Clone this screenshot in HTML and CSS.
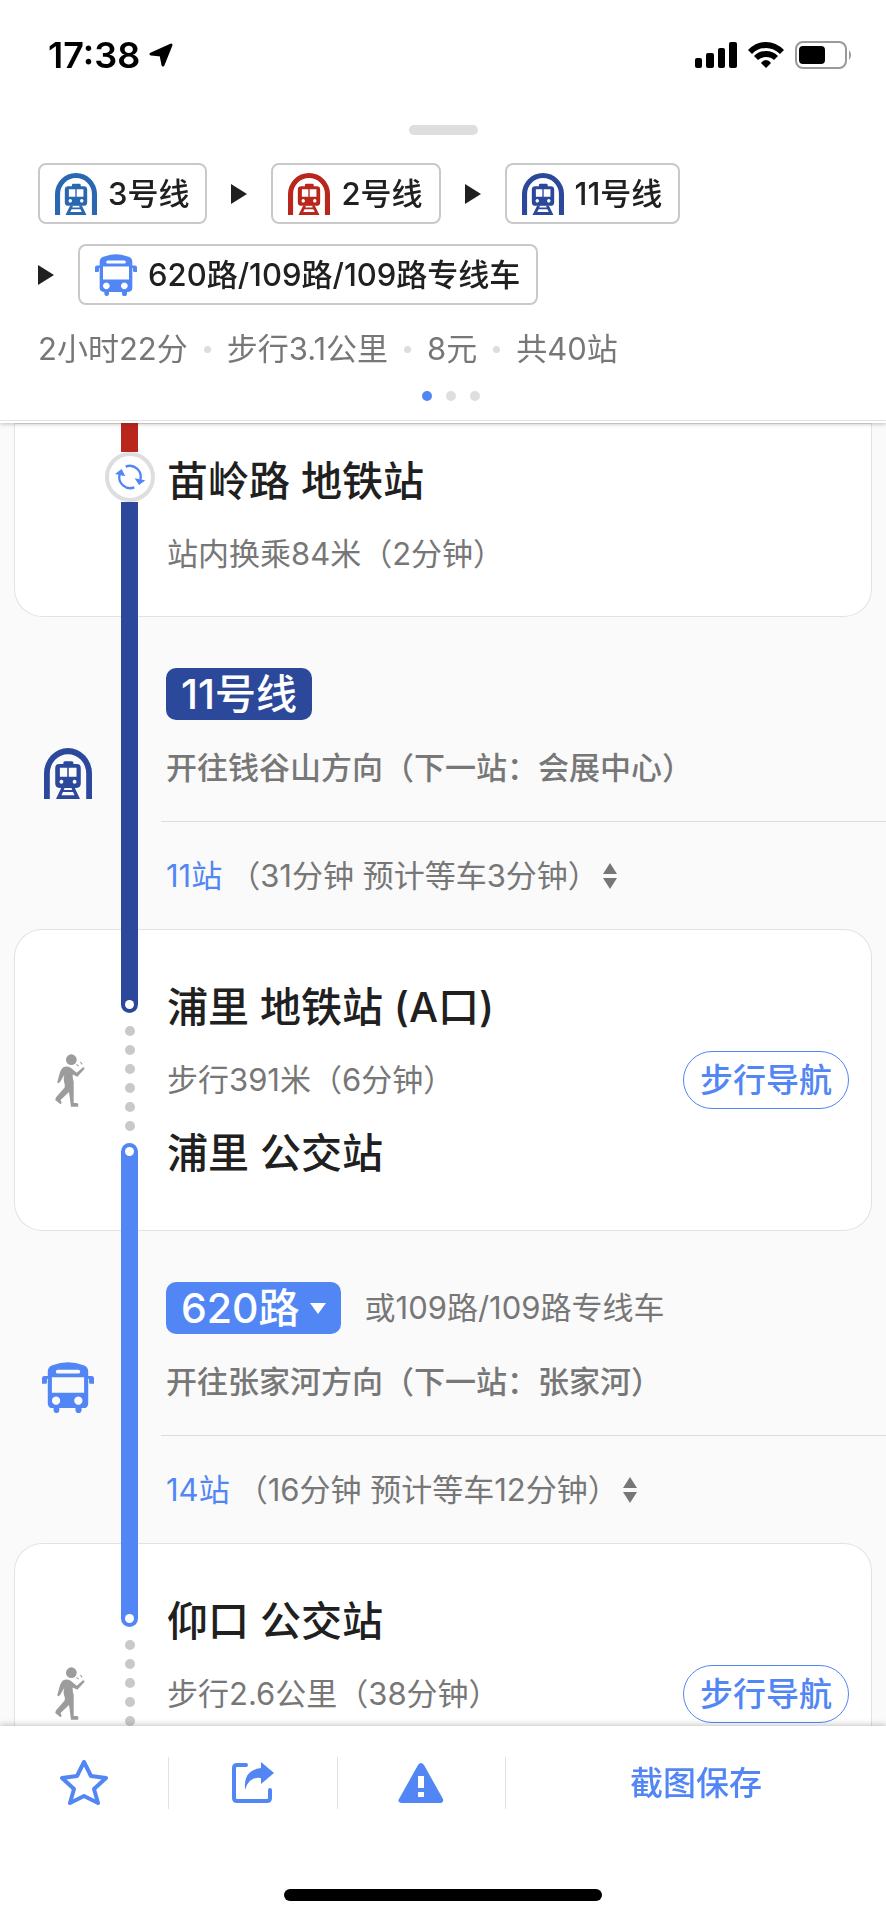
FILE: index.html
```html
<!DOCTYPE html>
<html lang="zh-CN">
<head>
  <meta charset="UTF-8" />
  <meta name="viewport" content="width=device-width, initial-scale=1" />
  <title>公交路线详情</title>
  <link rel="stylesheet" href="styles.css">
</head>
<body>

  <!-- Icons -->
  <svg class="sprite" aria-hidden="true">
    <symbol id="icon-train" viewBox="0 0 124 124" preserveAspectRatio="none">
      <path d="M0 124V62a62 62 0 0 1 124 0v62h-15V62a47 47 0 0 0-94 0v62z"/>
      <path fill-rule="evenodd" d="M50 39v-3q0-4 4-4h18q4 0 4 4v3h9q10 0 10 10v37q0 11-11 11H40q-11 0-11-11V49q0-10 10-10zM41 48v22h19V48zM64 48v22h20V48zM45 77a5 5 0 1 0 .1 0zM79 77a5 5 0 1 0 .1 0z"/>
      <path fill-rule="evenodd" d="M45 96h34l14 28H31zM53 97l-2 5h22l-2-5zM49 107l-4 8h34l-4-8z"/>
    </symbol>
    <symbol id="icon-bus" viewBox="0 0 126 124" preserveAspectRatio="none">
      <path fill-rule="evenodd" d="M14 24q0-12 11-16 38-15 76 0 11 4 11 16v76q0 12-12 12H26q-12 0-12-12zM38 19a4 4 0 0 0 0 9h50a4 4 0 0 0 0-9zM24 37v38h78V37zM34 84a10 10 0 1 0 .1 0zM88 84a10 10 0 1 0 .1 0z"/>
      <path d="M28 110h14v7a7 7 0 0 1-14 0zM81 110h15v7a7 7 0 0 1-15 0zM0 53V40q0-6 6-6h10v7h-4v8q0 4-3 4zM126 53V40q0-6-6-6h-10v7h4v8q0 4 3 4z"/>
    </symbol>
    <symbol id="icon-walk" viewBox="0 0 88 158">
      <circle cx="48" cy="17" r="16"/>
      <path d="M22 41q12-7 24 0l18 15 17-15q7-4 6 4L66 68l-14-7q-1 10 3 22v63h11q5 4 2 11H47l-6-44-25 24 3 9q-3 5-7 1L0 137l2-7 26-30q2-6-1-14-4-10 0-24L15 83q-7 8-9 1l6-22q4-15 10-21z"/>
      <path d="M63 31l7 5M75 24l5 7" fill="none" stroke="currentColor" stroke-width="3"/>
    </symbol>
    <symbol id="icon-sort" viewBox="0 0 14 26">
      <path d="M7 0l7 11H0zM7 26l7-11H0z"/>
    </symbol>
  </svg>

  <div class="app">
    <header class="header">
      <div class="status">
        <span class="time">17:38</span>
        <svg class="locate" viewBox="0 0 24 24"><path d="M22 2L14 22 12 12 2 11z"/></svg>
        <div class="status-icons">
          <svg width="42" height="26" viewBox="0 0 42 26"><rect y="16" width="7" height="10" rx="2"/><rect x="11" y="11" width="8" height="15" rx="2"/><rect x="23" y="6" width="7" height="20" rx="2"/><rect x="34" width="8" height="26" rx="2"/></svg>
          <svg width="36" height="26" viewBox="0 0 36 26"><path d="M18 0q10 0 18 8l-4 4q-6-6-14-6t-14 6L0 8q8-8 18-8zM18 9q7 0 12 5l-4 4q-3-3-8-3t-8 3l-4-4q5-5 12-5zM18 18q3 0 5 3l-5 5-5-5q2-3 5-3z"/></svg>
          <svg width="58" height="28" viewBox="0 0 58 28"><rect x="1" y="1" width="50" height="26" rx="7" fill="none" stroke="#999" stroke-width="2"/><rect x="4" y="5" width="26" height="18" rx="4"/><path d="M54 9q4 5 0 10z" fill="#999"/></svg>
        </div>
      </div>
      <div class="handle"></div>

      <div class="route">
        <div class="hop"><span class="chip"><svg class="chip-icon line3"><use href="#icon-train"/></svg>3号线</span></div>
        <div class="hop"><span class="arrow"></span><span class="chip"><svg class="chip-icon line2"><use href="#icon-train"/></svg>2号线</span></div>
        <div class="hop"><span class="arrow"></span><span class="chip"><svg class="chip-icon line11"><use href="#icon-train"/></svg>11号线</span></div>
        <div class="hop"><span class="arrow"></span><span class="chip"><svg class="chip-icon bus"><use href="#icon-bus"/></svg>620路/109路/109路专线车</span></div>
      </div>

      <ul class="meta">
        <li>2小时22分</li>
        <li>步行3.1公里</li>
        <li>8元</li>
        <li>共40站</li>
      </ul>

      <div class="pager">
        <span class="active"></span><span></span><span></span>
      </div>
    </header>

    <main class="timeline">
      <section class="step card first">
        <div class="icon-col"></div>
        <div class="rail">
          <div class="seg red"></div>
          <div class="transfer">
            <svg viewBox="0 0 90 76"><path d="M32 7A33 33 0 0 1 76 46M58 69A33 33 0 0 1 14 30" fill="none" stroke="currentColor" stroke-width="7"/><path d="M59 42l32 6-19 14zM0 29l20-15 11 22z"/></svg>
          </div>
          <div class="seg navy fill"></div>
        </div>
        <div class="body">
          <h2>苗岭路 地铁站</h2>
          <div class="walk-row"><span>站内换乘84米（2分钟）</span></div>
        </div>
      </section>

      <section class="step leg">
        <div class="icon-col"><svg class="train-icon line11"><use href="#icon-train"/></svg></div>
        <div class="rail"><div class="seg navy fill"></div></div>
        <div class="body">
          <div class="badge-row"><span class="badge navy">11号线</span></div>
          <p class="direction">开往钱谷山方向（下一站：会展中心）</p>
          <div class="stops"><a href="#">11站</a><span>（31分钟 预计等车3分钟）</span><svg class="sort"><use href="#icon-sort"/></svg></div>
        </div>
      </section>

      <section class="step card">
        <div class="icon-col"><svg class="walk-icon"><use href="#icon-walk"/></svg></div>
        <div class="rail">
          <div class="seg navy end"></div>
          <div class="dots"><i></i><i></i><i></i><i></i><i></i><i></i></div>
          <div class="seg blue start"></div>
        </div>
        <div class="body">
          <h2>浦里 地铁站 (A口)</h2>
          <div class="walk-row"><span>步行391米（6分钟）</span><button class="nav-btn" type="button">步行导航</button></div>
          <h2>浦里 公交站</h2>
        </div>
      </section>

      <section class="step leg">
        <div class="icon-col"><svg class="bus-icon bus"><use href="#icon-bus"/></svg></div>
        <div class="rail"><div class="seg blue fill"></div></div>
        <div class="body">
          <div class="badge-row"><button class="badge blue" type="button">620路<span class="caret"></span></button><span>或109路/109路专线车</span></div>
          <p class="direction">开往张家河方向（下一站：张家河）</p>
          <div class="stops"><a href="#">14站</a><span>（16分钟 预计等车12分钟）</span><svg class="sort"><use href="#icon-sort"/></svg></div>
        </div>
      </section>

      <section class="step card">
        <div class="icon-col"><svg class="walk-icon"><use href="#icon-walk"/></svg></div>
        <div class="rail">
          <div class="seg blue end"></div>
          <div class="dots"><i></i><i></i><i></i><i></i><i></i><i></i></div>
        </div>
        <div class="body">
          <h2>仰口 公交站</h2>
          <div class="walk-row"><span>步行2.6公里（38分钟）</span><button class="nav-btn" type="button">步行导航</button></div>
        </div>
      </section>
    </main>

    <footer class="footer">
      <nav class="toolbar">
        <button type="button" aria-label="收藏"><svg width="48" height="46" viewBox="0 0 48 46"><path d="M24 2l7 14 15 2-12 11 4 14-14-7-14 7 4-14L2 18l15-2z" fill="none" stroke="currentColor" stroke-width="4" stroke-linejoin="round"/></svg></button>
        <button type="button" aria-label="分享"><svg width="42" height="42" viewBox="0 0 42 42"><path d="M14 3H5q-3 0-3 3v30q0 3 3 3h30q3 0 3-3V28" fill="none" stroke="currentColor" stroke-width="4" stroke-linecap="round"/><path d="M29 0l13 11-13 11v-6q-12-2-16 12Q11 8 29 6z"/></svg></button>
        <button type="button" aria-label="上报"><svg width="46" height="40" viewBox="0 0 46 40"><path fill-rule="evenodd" d="M20 2q3-4 6 0l19 34q1 3-2 4H3q-4-1-2-4zM20 13v12h6V13zM20 29v5h6v-5z"/></svg></button>
        <button type="button">截图保存</button>
      </nav>
      <div class="home-bar"></div>
    </footer>
  </div>

</body>
</html>
```

FILE: styles.css
```css
:root {
  --blue: #5286f5;
  --navy: #2c489b;
  --red: #b9261b;
  --text: #202020;
  --gray: #777;
}

* {
  box-sizing: border-box;
}

body {
  margin: 0;
  font-family: Inter, "Noto Sans CJK SC", sans-serif;
  font-size: 31px;
  line-height: 42px;
  color: var(--gray);
  background: #fff;
}

svg {
  display: block;
  flex: none;
  fill: currentColor;
}

button {
  font: inherit;
  border: none;
  background: none;
  padding: 0;
  cursor: pointer;
}

.sprite {
  position: absolute;
  width: 0;
  height: 0;
}

.app {
  display: flex;
  flex-direction: column;
  height: 100vh;
}

.line3 { color: #2a67b1; }
.line2 { color: var(--red); }
.line11 { color: var(--navy); }
.bus { color: var(--blue); }

/* Header */
.header {
  position: relative;
  z-index: 1;
  padding-bottom: 2px;
  background: #fff;
  box-shadow: 0 1px 4px rgba(60, 40, 40, 0.3);
}

.status {
  display: flex;
  align-items: center;
  height: 109px;
  padding: 0 33px 0 48px;
  color: #000;
}

.time {
  font-size: 36px;
  font-weight: 600;
}

.locate {
  width: 24px;
  height: 24px;
  margin-left: 9px;
  stroke: #000;
  stroke-width: 3px;
  stroke-linejoin: round;
}

.status-icons {
  display: flex;
  align-items: center;
  gap: 11px;
  margin-left: auto;
}

.handle {
  width: 69px;
  height: 10px;
  margin: 16px auto 28px;
  border-radius: 5px;
  background: #dedede;
}

.route {
  display: flex;
  flex-wrap: wrap;
  gap: 20px 24px;
  padding: 0 38px;
}

.hop {
  display: flex;
  align-items: center;
  gap: 24px;
}

.chip {
  display: flex;
  align-items: center;
  gap: 11px;
  height: 61px;
  padding: 0 16px 0 15px;
  border: 2px solid #c9c9c9;
  border-radius: 8px;
  color: var(--text);
  font-weight: 500;
}

.chip-icon {
  width: 42px;
  height: 42px;
}

.arrow {
  border-left: 16px solid var(--text);
  border-top: 10px solid transparent;
  border-bottom: 10px solid transparent;
}

.meta {
  display: flex;
  margin: 23px 0 21px;
  padding: 0 38px;
  list-style: none;
}

.meta li {
  display: flex;
  align-items: center;
}

.meta li + li::before {
  content: '';
  width: 7px;
  height: 7px;
  margin: 0 16px;
  border-radius: 50%;
  background: #ddd;
}

.pager {
  display: flex;
  justify-content: center;
  gap: 14px;
  padding: 0 0 19px 15px;
  border-bottom: 1px solid #e2e2e2;
}

.pager span {
  width: 10px;
  height: 10px;
  border-radius: 50%;
  background: #dedede;
}

.pager .active {
  background: var(--blue);
}

/* Timeline */
.timeline {
  flex: 1;
  min-height: 0;
  overflow-y: auto;
  scrollbar-width: none;
  background: #fafafa;
}

.step {
  display: grid;
  grid-template-columns: 107px 17px 1fr;
}

.card {
  min-height: 301px;
  margin: 0 14px;
  border-radius: 28px;
  background: #fff;
  box-shadow: inset 0 0 0 1px #e2e2e2;
}

.card.first {
  min-height: 0;
  border-radius: 0 0 28px 28px;
}

.leg {
  padding-left: 14px;
}

.icon-col {
  display: flex;
  align-items: center;
  justify-content: center;
}

.card .icon-col {
  padding-left: 4px;
}

.train-icon {
  width: 48px;
  height: 51px;
}

.bus-icon {
  width: 52px;
  height: 51px;
}

.walk-icon {
  width: 30px;
  height: 53px;
  color: #9c9c9c;
}

.rail {
  display: flex;
  flex-direction: column;
  align-items: center;
}

.seg {
  display: flex;
  align-items: flex-end;
  justify-content: center;
  width: 17px;
  height: 84px;
  padding: 4px 0;
}

.seg.fill {
  flex: 1;
}

.seg.red {
  height: 29px;
  background: var(--red);
}

.navy { background: var(--navy); }
.blue { background: var(--blue); }

.seg.end {
  border-radius: 0 0 9px 9px;
}

.seg.start {
  align-items: flex-start;
  height: 88px;
  border-radius: 9px 9px 0 0;
}

.seg.end::after,
.seg.start::after {
  content: '';
  width: 9px;
  height: 9px;
  border-radius: 50%;
  background: #fff;
}

.transfer {
  display: flex;
  align-items: center;
  justify-content: center;
  width: 50px;
  height: 50px;
  border: 4px solid #dedede;
  border-radius: 50%;
  background: #fff;
  color: var(--blue);
}

.transfer svg {
  width: 30px;
  height: 26px;
}

.dots {
  display: flex;
  flex-direction: column;
  gap: 9px;
  padding: 13px 0 12px;
  flex: 1;
}

.dots i {
  width: 10px;
  height: 10px;
  border-radius: 50%;
  background: #c9c9c9;
}

.body {
  min-width: 0;
  margin-left: 23px;
}

.card .body {
  padding: 48px 23px 47px 6px;
}

.card.first .body {
  padding: 28px 23px 34px 6px;
}

h2 {
  margin: 0;
  font-size: 41px;
  line-height: 60px;
  font-weight: 500;
  color: var(--text);
}

.walk-row {
  display: flex;
  align-items: center;
  justify-content: space-between;
  height: 58px;
  margin: 14px 0;
}

.card.first .walk-row {
  margin-bottom: 0;
}

.nav-btn {
  width: 166px;
  height: 58px;
  border: 1px solid var(--blue);
  border-radius: 29px;
  color: var(--blue);
  font-size: 33px;
  font-weight: 500;
}

.badge-row {
  display: flex;
  align-items: center;
  gap: 24px;
  padding: 51px 0 27px 5px;
}

.badge {
  display: flex;
  align-items: center;
  height: 52px;
  padding: 0 15px;
  border-radius: 10px;
  color: #fff;
  font-size: 41px;
  font-weight: 500;
}

.caret {
  margin-left: 10px;
  border-top: 11px solid #fff;
  border-left: 8px solid transparent;
  border-right: 8px solid transparent;
}

.direction {
  margin: 0 0 32px;
  padding-left: 5px;
  font-weight: 500;
}

.stops {
  display: flex;
  align-items: center;
  height: 108px;
  padding-left: 5px;
  border-top: 1px solid #dcdcdc;
}

.stops a {
  margin-right: 7px;
  color: var(--blue);
  text-decoration: none;
}

.sort {
  width: 14px;
  height: 26px;
  margin-left: 4px;
}

/* Toolbar */
.footer {
  position: relative;
  z-index: 1;
  background: #fff;
  box-shadow: 0 -1px 6px rgba(60, 40, 40, 0.3);
}

.toolbar {
  display: grid;
  grid-template-columns: 19% 19% 19% 43%;
  align-items: center;
  height: 114px;
}

.toolbar button {
  display: flex;
  align-items: center;
  justify-content: center;
  height: 52px;
  color: var(--blue);
  font-size: 33px;
  font-weight: 500;
}

.toolbar button + button {
  border-left: 1px solid #e2e2e2;
}

.home-bar {
  width: 36%;
  height: 12px;
  margin: 49px auto 19px;
  border-radius: 6px;
  background: #000;
}
```
